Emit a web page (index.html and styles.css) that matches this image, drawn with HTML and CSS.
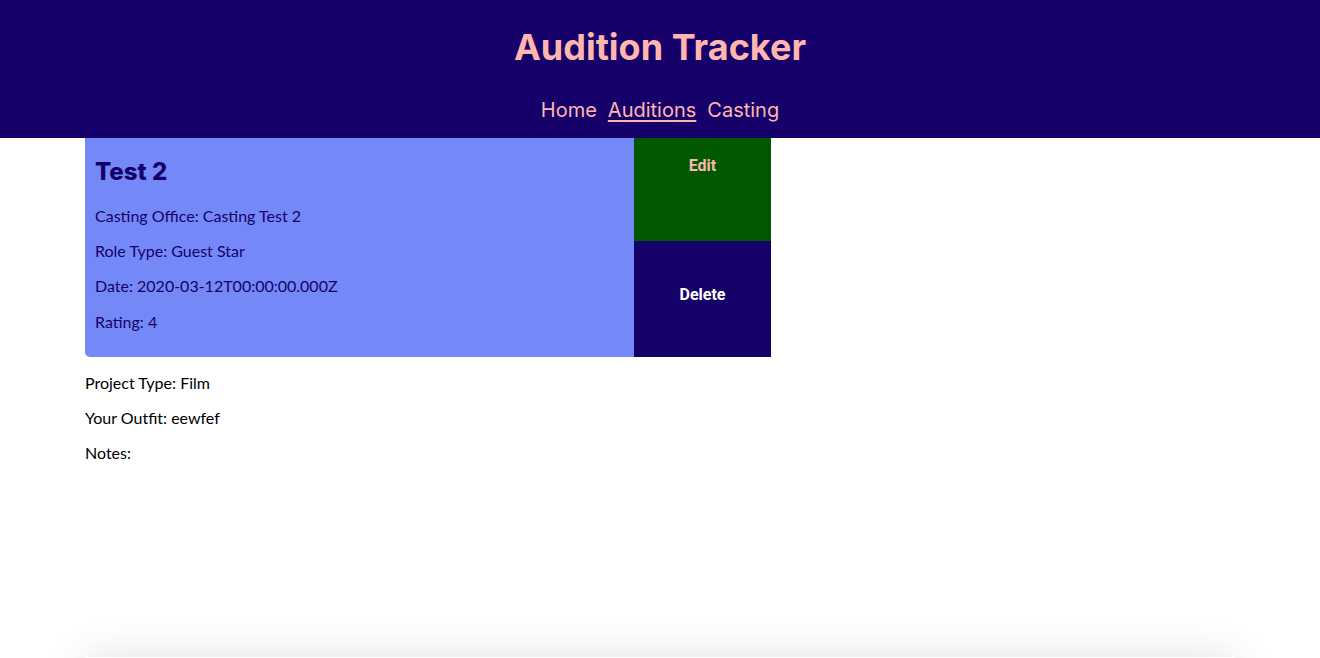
FILE: index.html
```html
<!DOCTYPE html>
<html>
<head>
<meta charset="utf-8">
<link rel="stylesheet" href="styles.css">
</head>
<body>
<header class="site-header">
  <h1 class="site-title">Audition Tracker</h1>
  <nav class="site-nav">
    <a href="#" class="nav-link">Home</a>
    <a href="#" class="nav-link active">Auditions</a>
    <a href="#" class="nav-link">Casting</a>
  </nav>
</header>
<main class="container">
  <section class="card">
    <div class="card-body">
      <h2 class="card-title">Test 2</h2>
      <p>Casting Office: Casting Test 2</p>
      <p>Role Type: Guest Star</p>
      <p>Date: 2020-03-12T00:00:00.000Z</p>
      <p>Rating: 4</p>
    </div>
    <div class="card-actions">
      <button class="btn btn-edit">Edit</button>
      <button class="btn btn-delete">Delete</button>
    </div>
  </section>
  <div class="details">
    <p>Project Type: Film</p>
    <p>Your Outfit: eewfef</p>
    <p>Notes:</p>
  </div>
  <div class="panel"></div>
</main>
</body>
</html>
```
FILE: styles.css
```css
html, body {
  margin: 0;
  padding: 0;
  background: #ffffff;
}
body {
  font-family: Lato, "Liberation Sans", sans-serif;
  font-size: 16px;
  color: #000;
}
.site-header {
  background: #16006a;
  padding: 27px 0 16px;
  text-align: center;
}
.site-title {
  margin: 0;
  font-family: Inter, "Liberation Sans", sans-serif;
  font-weight: 700;
  font-size: 36px;
  line-height: 40px;
  color: #ffb6af;
}
.site-nav {
  margin-top: 31px;
  display: flex;
  justify-content: center;
  gap: 11px;
  font-family: Inter, "Liberation Sans", sans-serif;
  font-size: 20px;
  line-height: 24px;
}
.nav-link {
  color: #ffb6af;
  text-decoration: none;
}
.nav-link.active {
  text-decoration: underline;
  text-underline-offset: 3px;
}
.container {
  width: 1150px;
  margin: 0 auto;
}
.card {
  display: flex;
  width: 686px;
}
.card-body {
  flex: 0 0 549px;
  box-sizing: border-box;
  background: #7489f7;
  color: #16006a;
  padding: 1px 10px 10px;
  border-bottom-left-radius: 5px;
}
.card-title {
  font-family: Inter, "Liberation Sans", sans-serif;
  font-weight: 800;
  font-size: 24px;
  line-height: 28px;
  margin: 19px 0 20px;
}
.card-body p {
  margin: 16px 0;
  line-height: 19.2px;
}
.card-actions {
  flex: 0 0 137px;
  display: flex;
  flex-direction: column;
}
.btn {
  border: none;
  margin: 0;
  font-family: Roboto, "Liberation Sans", sans-serif;
  font-weight: 700;
  font-size: 16px;
  line-height: 19px;
  text-align: center;
  width: 100%;
  display: flex;
  justify-content: center;
  align-items: flex-start;
}
.btn-edit {
  background: #005800;
  color: #ffb6af;
  height: 103px;
  padding: 18px 0 0;
}
.btn-delete {
  background: #16006a;
  color: #ffffff;
  flex: 1;
  padding: 44px 0 0;
}
.details {
  padding-top: 16px;
}
.details p {
  margin: 16px 0;
  line-height: 19.2px;
}
.details p:first-child {
  margin-top: 0;
}
.panel {
  margin-top: 195px;
  height: 200px;
  box-shadow: 0 0 40px rgba(0, 0, 0, 0.12);
}
```
